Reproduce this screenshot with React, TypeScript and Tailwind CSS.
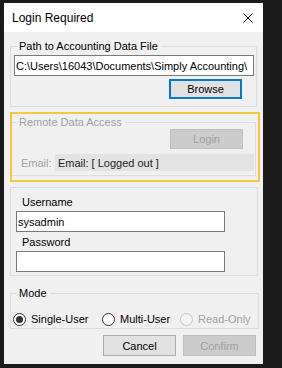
import React from "react";

function Radio({
  label,
  checked = false,
  disabled = false,
  width,
}: {
  label: string;
  checked?: boolean;
  disabled?: boolean;
  width: string;
}) {
  return (
    <label className={`flex items-center gap-[5px] ${width}`}>
      <span
        className={`flex items-center justify-center w-[13px] h-[13px] rounded-full border ${
          disabled ? "border-[#c4c4c4] bg-[#f4f4f4]" : "border-[#333333] bg-white"
        }`}
      >
        {checked && <span className="w-[7px] h-[7px] rounded-full bg-[#333333]" />}
      </span>
      <span className={disabled ? "text-[#a0a0a0]" : "text-black"}>{label}</span>
    </label>
  );
}

export default function App() {
  return (
    <div className="w-[282px] h-[368px] bg-[#1b1b1b] pt-[3px] pl-[4px] font-['Liberation_Sans',Arial,sans-serif] text-[11px] leading-[14px] text-black">
      <div className="w-[259px] h-[361px] bg-[#f0f0f0] flex flex-col">
        {/* Title bar */}
        <div className="h-[29px] bg-white flex items-center justify-between pl-[8px] pr-[10px] shrink-0">
          <span className="text-[12px]">Login Required</span>
          <svg width="10" height="10" viewBox="0 0 10 10" className="text-black">
            <path d="M0.5 0.5 L9.5 9.5 M9.5 0.5 L0.5 9.5" stroke="currentColor" strokeWidth="1" />
          </svg>
        </div>

        <div className="px-[6px] flex flex-col">
          {/* Path group */}
          <fieldset className="mt-[7px] w-[247px] border border-[#dcdcdc] pb-[7px]">
            <legend className="ml-[5px] px-[3px]">Path to Accounting Data File</legend>
            <div className="mt-[2px] ml-[3px] w-[240px] h-[21px] bg-white border border-[#7a7a7a] pl-[1px] flex items-center overflow-hidden whitespace-nowrap">
              C:\Users\16043\Documents\Simply Accounting\
            </div>
            <div className="mt-[3px] flex justify-end pr-[14px]">
              <button className="w-[73px] h-[20px] bg-[#e1e1e1] border-2 border-[#0078d7] flex items-center justify-center">
                Browse
              </button>
            </div>
          </fieldset>

          {/* Remote group, highlighted */}
          <div className="relative mt-[8px]">
            <fieldset className="w-[246px] border border-[#dcdcdc] pb-[4px]">
              <legend className="ml-[5px] px-[3px] text-[#a0a0a0]">Remote Data Access</legend>
              <div className="flex justify-end pr-[12px]">
                <button className="w-[73px] h-[20px] bg-[#cccccc] border border-[#bfbfbf] text-[#a0a0a0] flex items-center justify-center">
                  Login
                </button>
              </div>
              <div className="mt-[5px] flex items-center h-[17px]">
                <span className="ml-[10px] w-[34px] text-[#a0a0a0]">Email:</span>
                <span className="flex-1 mr-[1px] h-[17px] bg-[#e3e3e3] pl-[3px] flex items-center text-[#222222]">
                  Email: [ Logged out ]
                </span>
              </div>
            </fieldset>
            <div className="absolute top-[-3px] left-0 w-[250px] bottom-[-6px] border-2 border-[#f7c73f]" />
          </div>

          {/* Credentials group */}
          <div className="mt-[11px] w-[248px] border border-[#dcdcdc] pt-[7px] pb-[3px] flex flex-col">
            <span className="ml-[11px]">Username</span>
            <div className="mt-[2px] ml-[5px] w-[209px] h-[21px] bg-white border border-[#7a7a7a] pl-[1px] flex items-center">
              sysadmin
            </div>
            <span className="mt-[3px] ml-[11px]">Password</span>
            <div className="mt-[2px] ml-[5px] w-[209px] h-[21px] bg-white border border-[#7a7a7a]" />
          </div>

          {/* Mode group */}
          <fieldset className="mt-[10px] w-[248px] border border-[#dcdcdc] pb-[1px]">
            <legend className="ml-[5px] px-[3px]">Mode</legend>
            <div className="mt-[11px] pl-[2px] flex items-center h-[16px]">
              <Radio label="Single-User" checked width="w-[89px]" />
              <Radio label="Multi-User" width="w-[78px]" />
              <Radio label="Read-Only" disabled width="w-[78px]" />
            </div>
          </fieldset>

          {/* Buttons */}
          <div className="mt-[6px] flex justify-end gap-[7px] pr-[1px]">
            <button className="w-[73px] h-[21px] bg-[#e1e1e1] border border-[#adadad] flex items-center justify-center">
              Cancel
            </button>
            <button className="w-[73px] h-[21px] bg-[#cccccc] border border-[#bfbfbf] text-[#a0a0a0] flex items-center justify-center">
              Confirm
            </button>
          </div>
        </div>
      </div>
    </div>
  );
}
